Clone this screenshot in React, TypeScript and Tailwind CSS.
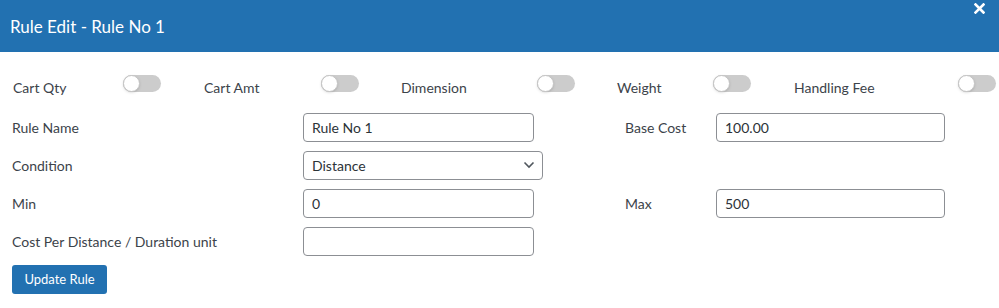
import React from 'react';

const Toggle: React.FC = () => (
  <span className="relative inline-block w-[38px] h-[17px] rounded-full bg-[#cccccc] shrink-0">
    <span className="absolute left-0 top-0 w-[17px] h-[17px] rounded-full bg-white border border-[#c4c4c4] shadow-sm" />
  </span>
);

const inputCls =
  'h-[29px] rounded-[4px] border border-[#8c8f94] bg-white px-[8px] text-[14px] text-[#2c3338] outline-none';

const App: React.FC = () => {
  const toggles = [
    { label: 'Cart Qty', w: 'w-[110px]', gap: 'mr-[43px]' },
    { label: 'Cart Amt', w: 'w-[117px]', gap: 'mr-[42px]' },
    { label: 'Dimension', w: 'w-[136px]', gap: 'mr-[42px]' },
    { label: 'Weight', w: 'w-[96px]', gap: 'mr-[43px]' },
    { label: 'Handling Fee', w: 'w-[164px]', gap: '' },
  ];

  return (
    <div
      className="w-[999px] h-[308px] bg-white text-[#3c434a] text-[14px] overflow-hidden"
      style={{ fontFamily: 'Lato, "Noto Sans", sans-serif' }}
    >
      {/* Header */}
      <header className="relative h-[52px] bg-[#2271b1] flex items-center px-[10px]">
        <h2 className="text-white text-[17px] leading-none">Rule Edit - Rule No 1</h2>
        <svg
          className="absolute right-[14px] top-[3px]"
          width="11"
          height="11"
          viewBox="0 0 11 11"
          stroke="#ffffff"
          strokeWidth="2.6"
          strokeLinecap="square"
        >
          <path d="M1.5 1.5 L9.5 9.5 M9.5 1.5 L1.5 9.5" />
        </svg>
      </header>

      {/* Toggles */}
      <div className="flex items-center pl-[13px] mt-[23px] h-[20px]">
        {toggles.map((t) => (
          <div key={t.label} className={`flex items-center ${t.gap}`}>
            <span className={`${t.w} pt-[5px]`}>{t.label}</span>
            <span className="-mt-[4px] flex">
              <Toggle />
            </span>
          </div>
        ))}
      </div>

      {/* Form */}
      <div className="pl-[12px] mt-[18px] flex flex-col gap-[9px]">
        <div className="flex items-center">
          <label className="w-[291px]">Rule Name</label>
          <input className={`${inputCls} w-[231px]`} defaultValue="Rule No 1" />
          <label className="ml-[91px] w-[91px]">Base Cost</label>
          <input className={`${inputCls} w-[229px]`} defaultValue="100.00" />
        </div>
        <div className="flex items-center">
          <label className="w-[291px]">Condition</label>
          <div className="relative w-[240px]">
            <div className={`${inputCls} w-full flex items-center`}>Distance</div>
            <svg
              className="absolute right-[8px] top-[10px]"
              width="12"
              height="8"
              viewBox="0 0 12 8"
              fill="none"
              stroke="#50575e"
              strokeWidth="1.6"
            >
              <path d="M1.5 1.5 L6 6 L10.5 1.5" />
            </svg>
          </div>
        </div>
        <div className="flex items-center">
          <label className="w-[291px]">Min</label>
          <input className={`${inputCls} w-[231px]`} defaultValue="0" />
          <label className="ml-[91px] w-[91px]">Max</label>
          <input className={`${inputCls} w-[229px]`} defaultValue="500" />
        </div>
        <div className="flex items-center">
          <label className="w-[291px]">Cost Per Distance / Duration unit</label>
          <input className={`${inputCls} w-[231px]`} defaultValue="" />
        </div>
        <div>
          <button className="h-[29px] w-[95px] rounded-[3px] bg-[#2271b1] text-white text-[13px]">
            Update Rule
          </button>
        </div>
      </div>
    </div>
  );
};

export default App;
